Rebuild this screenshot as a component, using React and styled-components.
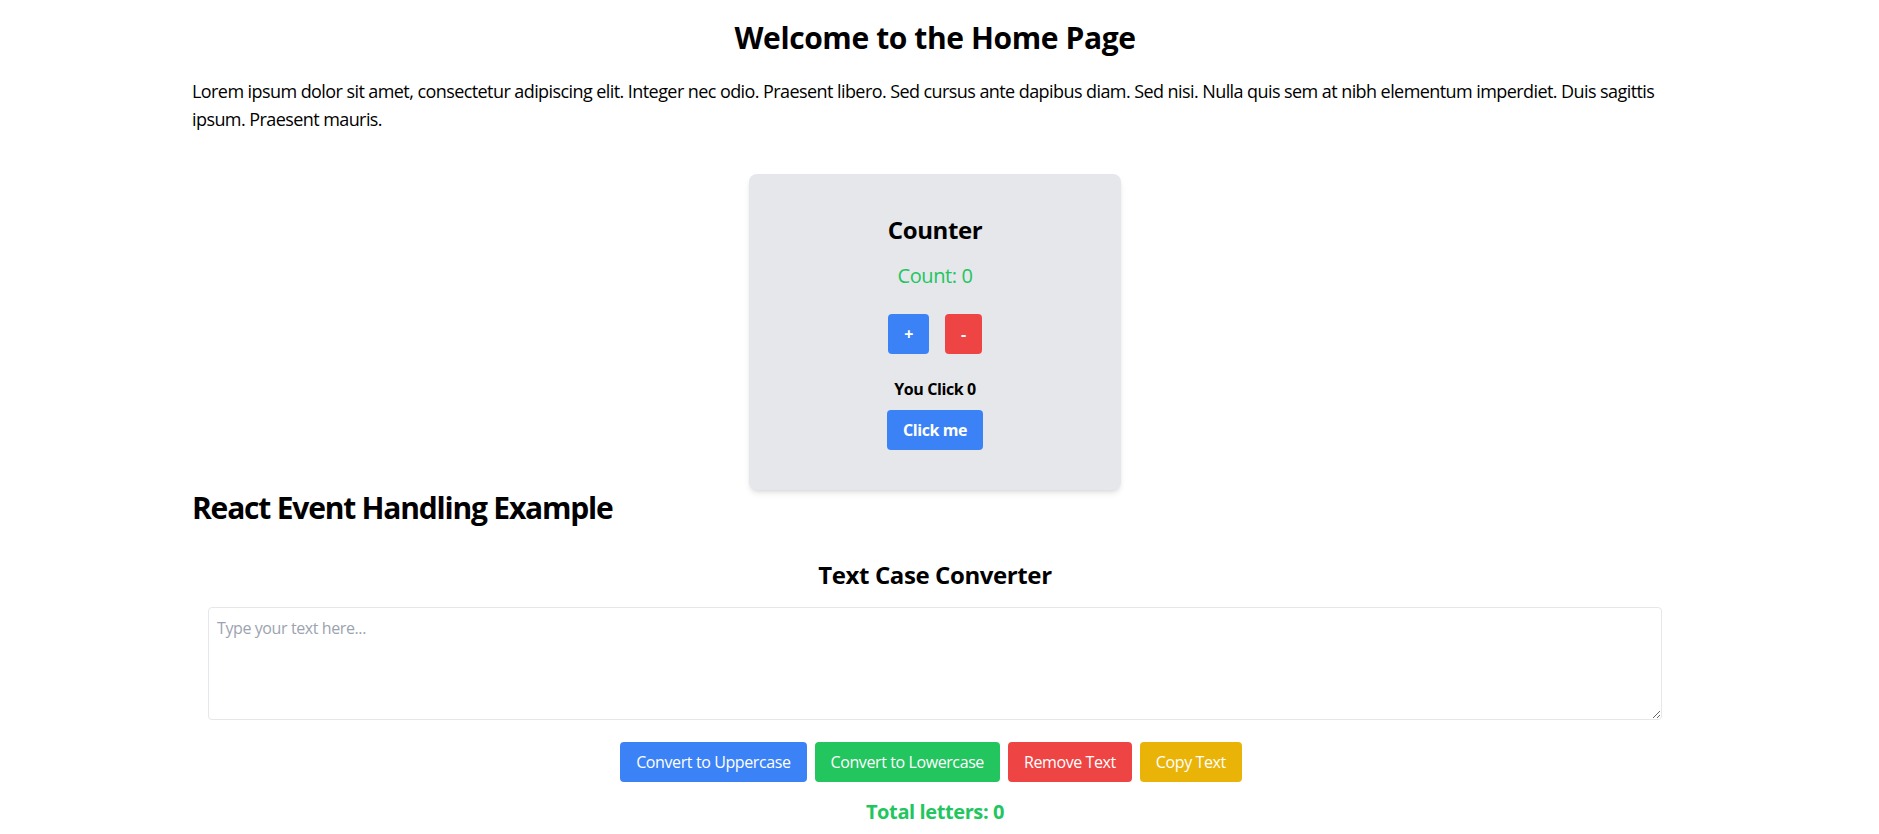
import React, { useState } from 'react';
import styled, { createGlobalStyle } from 'styled-components';

const GlobalStyle = createGlobalStyle`
  *, *::before, *::after {
    box-sizing: border-box;
  }
  html, body {
    margin: 0;
    padding: 0;
    background: #ffffff;
    overflow: hidden;
  }
  body {
    font-family: "Open Sans", "Noto Sans", sans-serif;
    letter-spacing: -0.025em;
    color: #000000;
  }
  #root {
    padding-right: 9px;
  }
`;

// Layout
const Page = styled.main`
  max-width: 1526px;
  margin: 0 auto;
  padding: 20px 20px 8px;
`;

const Title = styled.h1`
  margin: 0;
  font-size: 30px;
  line-height: 36px;
  font-weight: 700;
  text-align: center;
`;

const Intro = styled.p`
  margin: 21px 0 0;
  font-size: 18px;
  line-height: 28px;
  letter-spacing: -0.032em;
`;

// Counter card
const Card = styled.section`
  width: 25%;
  margin: 41px auto 0;
  padding: 40px;
  background-color: #e5e7eb;
  border-radius: 8px;
  box-shadow: 0 4px 6px -1px rgba(0, 0, 0, 0.1), 0 2px 4px -2px rgba(0, 0, 0, 0.1);
  text-align: center;
`;

const CardTitle = styled.h2`
  margin: 0;
  font-size: 24px;
  line-height: 32px;
  font-weight: 700;
`;

const CountText = styled.p`
  margin: 16px 0 0;
  font-size: 20px;
  line-height: 28px;
  color: #22c55e;
`;

const CounterRow = styled.div`
  margin-top: 24px;
  display: flex;
  justify-content: center;
  gap: 16px;
`;

const ClickLabel = styled.p`
  margin: 23px 0 0;
  font-size: 16px;
  line-height: 24px;
  font-weight: 700;
`;

const Button = styled.button`
  display: inline-block;
  padding: 8px 16px;
  border: none;
  border-radius: 4px;
  font-family: inherit;
  font-size: 16px;
  line-height: 24px;
  letter-spacing: inherit;
  font-weight: ${props => (props.bold ? 700 : 400)};
  color: #ffffff;
  background-color: ${props => props.color};
  cursor: pointer;
  margin-right: ${props => (props.spaced ? '8px' : '0')};
  margin-top: ${props => props.top || '0'};
`;

// Text converter
const SectionHeading = styled.h2`
  margin: 0;
  font-size: 30px;
  line-height: 36px;
  font-weight: 700;
  letter-spacing: -0.04em;
`;

const Converter = styled.section`
  margin-top: 33px;
  padding: 0 16px;
  text-align: center;
`;

const ConverterTitle = styled.h3`
  margin: 0;
  font-size: 24px;
  line-height: 32px;
  font-weight: 700;
`;

const TextArea = styled.textarea`
  display: block;
  width: 100%;
  height: 113px;
  margin-top: 16px;
  padding: 8px;
  border: 1px solid #e5e7eb;
  border-radius: 4px;
  font-family: inherit;
  font-size: 16px;
  line-height: 24px;
  letter-spacing: inherit;
  color: #111827;
  resize: both;

  &::placeholder {
    color: #9ca3af;
  }
  &:focus {
    outline: none;
  }
`;

const ButtonRow = styled.div`
  margin-top: 22px;
  text-align: center;
  font-size: 0;
`;

const Total = styled.p`
  margin: 16px 0 0;
  font-size: 20px;
  line-height: 28px;
  font-weight: 700;
  color: #22c55e;
`;

function Counter() {
  const [count, setCount] = useState(0);
  const [clicks, setClicks] = useState(0);

  return (
    <Card>
      <CardTitle>Counter</CardTitle>
      <CountText>Count: {count}</CountText>
      <CounterRow>
        <Button bold color="#3b82f6" onClick={() => setCount(count + 1)}>+</Button>
        <Button bold color="#ef4444" onClick={() => setCount(count - 1)}>-</Button>
      </CounterRow>
      <ClickLabel>You Click {clicks}</ClickLabel>
      <Button bold color="#3b82f6" top="9px" onClick={() => setClicks(clicks + 1)}>
        Click me
      </Button>
    </Card>
  );
}

function TextConverter() {
  const [text, setText] = useState('');

  const copyText = () => {
    if (navigator.clipboard) navigator.clipboard.writeText(text).catch(() => {});
  };

  return (
    <Converter>
      <ConverterTitle>Text Case Converter</ConverterTitle>
      <TextArea
        rows={4}
        placeholder="Type your text here..."
        value={text}
        onChange={(e) => setText(e.target.value)}
      />
      <ButtonRow>
        <Button spaced color="#3b82f6" onClick={() => setText(text.toUpperCase())}>
          Convert to Uppercase
        </Button>
        <Button spaced color="#22c55e" onClick={() => setText(text.toLowerCase())}>
          Convert to Lowercase
        </Button>
        <Button spaced color="#ef4444" onClick={() => setText('')}>
          Remove Text
        </Button>
        <Button spaced color="#eab308" onClick={copyText}>
          Copy Text
        </Button>
      </ButtonRow>
      <Total>Total letters: {text.replace(/\s/g, '').length}</Total>
    </Converter>
  );
}

export default function App() {
  return (
    <>
      <GlobalStyle />
      <Page>
        <Title>Welcome to the Home Page</Title>
        <Intro>
          Lorem ipsum dolor sit amet, consectetur adipiscing elit. Integer nec odio. Praesent
          libero. Sed cursus ante dapibus diam. Sed nisi. Nulla quis sem at nibh elementum
          imperdiet. Duis sagittis ipsum. Praesent mauris.
        </Intro>
        <Counter />
        <SectionHeading>React Event Handling Example</SectionHeading>
        <TextConverter />
      </Page>
    </>
  );
}
